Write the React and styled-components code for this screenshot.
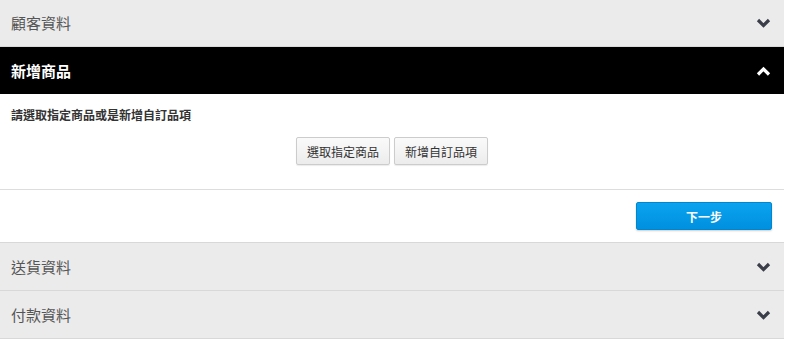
import styled, { createGlobalStyle } from "styled-components";

const GlobalStyle = createGlobalStyle`
    body {
        margin: 0;
        background: #ffffff;
        font-family: "Liberation Sans", "Noto Sans CJK TC", sans-serif;
    }
`

function Chevron({ up, color }) {
    return (
        <svg width="15" height="10" viewBox="0 0 15 10">
            <path
                d={up ? "M2 8.5 L7.5 3 L13 8.5" : "M2 2 L7.5 7.5 L13 2"}
                fill="none"
                stroke={color}
                strokeWidth="3.2"
            />
        </svg>
    )
}

function Section({ title, open, children }) {
    return (
        <SectionStyled>
            <HeaderStyled open={open}>
                <h2>{title}</h2>
                <Chevron up={open} color={open ? "#ffffff" : "#3b3d48"} />
            </HeaderStyled>
            {open && children}
        </SectionStyled>
    )
}

export default function App() {
    return (
        <PageStyled>
            <GlobalStyle />
            <Section title="顧客資料" />
            <Section title="新增商品" open>
                <BodyStyled>
                    <p>請選取指定商品或是新增自訂品項</p>
                    <ChoicesStyled>
                        <GreyButton>選取指定商品</GreyButton>
                        <GreyButton>新增自訂品項</GreyButton>
                    </ChoicesStyled>
                </BodyStyled>
                <FooterStyled>
                    <BlueButton>下一步</BlueButton>
                </FooterStyled>
            </Section>
            <Section title="送貨資料" />
            <Section title="付款資料" />
        </PageStyled>
    )
}

const PageStyled = styled.div`
    width: 784px;
    margin-top: -1px;
    display: flex;
    flex-direction: column;
`

const SectionStyled = styled.div`
    display: flex;
    flex-direction: column;
    border-bottom: 1px solid #d8d8d8;
    background: #ffffff;
`

const HeaderStyled = styled.div`
    box-sizing: border-box;
    height: 47px;
    display: flex;
    justify-content: space-between;
    align-items: center;
    padding: 0 13px 0 11px;
    background: ${(p) => (p.open ? "#000000" : "#ebebeb")};
    h2 {
        margin: 0;
        font-size: 15px;
        font-weight: ${(p) => (p.open ? 700 : 400)};
        color: ${(p) => (p.open ? "#ffffff" : "#555555")};
    }
`

const BodyStyled = styled.div`
    display: flex;
    flex-direction: column;
    padding: 12px 11px 24px 11px;
    border-bottom: 1px solid #dddddd;
    p {
        margin: 0 0 14px 0;
        font-size: 12px;
        font-weight: 700;
        color: #333333;
    }
`

const ChoicesStyled = styled.div`
    display: flex;
    justify-content: center;
    gap: 4px;
`

const GreyButton = styled.button`
    height: 28px;
    padding: 0 10px;
    font-family: inherit;
    font-size: 12px;
    color: #333333;
    background: linear-gradient(#fafafa, #ececec);
    border: 1px solid #cccccc;
    border-radius: 2px;
    box-shadow: 0 1px 1px rgba(0, 0, 0, 0.08);
`

const FooterStyled = styled.div`
    display: flex;
    justify-content: flex-end;
    padding: 12px 12px 12px 0;
`

const BlueButton = styled.button`
    width: 136px;
    height: 28px;
    font-family: inherit;
    font-size: 12px;
    font-weight: 700;
    color: #ffffff;
    background: linear-gradient(#0aa3ef, #0090e0);
    border: 1px solid #0086cf;
    border-radius: 2px;
    box-shadow: 0 1px 2px rgba(0, 0, 0, 0.2);
`
